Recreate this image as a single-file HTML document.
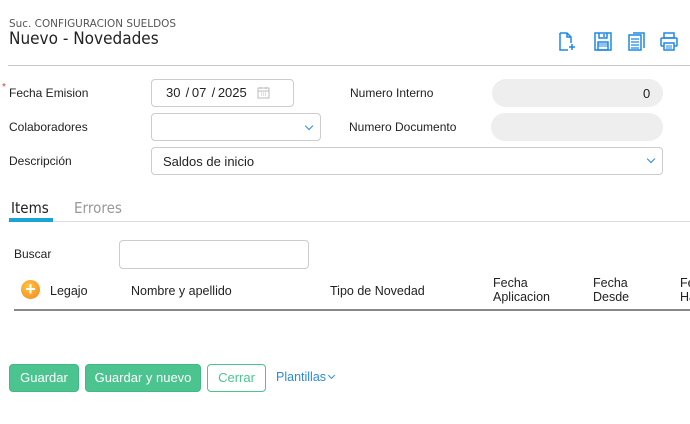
<!DOCTYPE html>
<html><head><meta charset="utf-8"><style>
*{box-sizing:border-box;margin:0;padding:0}
body{width:690px;height:424px;background:#fff;font-family:"Liberation Sans",sans-serif;color:#222;position:relative;overflow:hidden}
.a{position:absolute;white-space:nowrap}
.lbl{font-size:12px;color:#222}
.inp{position:absolute;border:1px solid #ccc;border-radius:4px;background:#fff}
.ro{position:absolute;background:#eeeeee;border-radius:14px}
.chev{position:absolute;width:6px;height:6px;border-right:1.3px solid #2d8ae0;border-bottom:1.3px solid #2d8ae0;transform:rotate(45deg)}
.btn{position:absolute;top:364px;height:28px;border-radius:4px;font-size:13px;line-height:26px;text-align:center}
.g{background:#4cc48f;color:#fff;border:1px solid #43b883}
.th{font-size:12.5px}
</style></head><body>
<div class="a" style="left:9px;top:17px;font-size:11px;color:#555;font-family:'DejaVu Sans',sans-serif;transform:scaleX(.95);transform-origin:left">Suc. CONFIGURACION SUELDOS</div>
<div class="a" style="left:9px;top:29px;font-size:17px;color:#222;font-family:'DejaVu Sans',sans-serif;transform:scaleX(.9);transform-origin:left">Nuevo - Novedades</div>

<svg class="a" style="left:557px;top:31px" width="125" height="22" viewBox="0 0 125 22" fill="none" stroke="#1e88e5" stroke-width="1.5">
<path d="M3 2h7l4 4v6M3 2v17h8M10 2v4h4M12 16h6M15 13v6"/>
<rect x="38" y="2" width="16" height="17"/><path d="M42 2v5h8v-5M47 3v3M41 11h10v8h-10z" /><path d="M41 13h10M41 15h10" stroke-width="1"/>
<path d="M74 4h10v15h-12v-15zM76 2h11v15"/><path d="M74 8h8M74 11h8M74 14h8M74 17h8" stroke-width="1.2"/>
<rect x="107" y="2" width="10" height="5"/><rect x="104" y="7" width="16" height="8" rx="1"/><rect x="107" y="12" width="10" height="7" fill="#fff"/><path d="M109 15h6M109 17h6" stroke-width="1"/>
</svg>
<div class="a" style="left:8px;top:65px;width:682px;height:1px;background:#c8c8c8"></div>

<div class="a" style="left:2px;top:82px;color:#e53935;font-size:10px">*</div>
<div class="a lbl" style="left:9px;top:86px">Fecha Emision</div>
<div class="inp" style="left:151px;top:79px;width:143px;height:28px"></div>
<div class="a" style="left:166px;top:85px;font-size:13px;word-spacing:-1px">30 &nbsp;/ 07 &nbsp;/ 2025</div>
<svg class="a" style="left:257px;top:86px" width="13" height="13" viewBox="0 0 13 13" fill="none" stroke="#bbb" stroke-width="1"><rect x="1" y="2" width="11" height="10"/><path d="M1 5h11M4 7h1M6 7h1M8 7h1M4 9h1M6 9h1M8 9h1M4 1v2M9 1v2"/></svg>

<div class="a lbl" style="left:350px;top:86px">Numero Interno</div>
<div class="ro" style="left:492px;top:79px;width:171px;height:28px"></div>
<div class="a" style="left:643px;top:86px;font-size:13px">0</div>

<div class="a lbl" style="left:9px;top:120px">Colaboradores</div>
<div class="inp" style="left:151px;top:113px;width:170px;height:28px"></div>
<div class="chev" style="left:306px;top:123px"></div>
<div class="a lbl" style="left:349px;top:120px">Numero Documento</div>
<div class="ro" style="left:491px;top:113px;width:172px;height:28px"></div>

<div class="a lbl" style="left:9px;top:154px">Descripción</div>
<div class="inp" style="left:151px;top:147px;width:512px;height:28px"></div>
<div class="a" style="left:163px;top:154px;font-size:13px">Saldos de inicio</div>
<div class="chev" style="left:648px;top:156px"></div>

<div class="a" style="left:11px;top:199px;font-size:15px;color:#222;font-family:'DejaVu Sans',sans-serif;transform:scaleX(.9);transform-origin:left">Items</div>
<div class="a" style="left:74px;top:199px;font-size:15px;color:#999;font-family:'DejaVu Sans',sans-serif;transform:scaleX(.9);transform-origin:left">Errores</div>
<div class="a" style="left:8px;top:221px;width:682px;height:1px;background:#ddd"></div>
<div class="a" style="left:9px;top:218px;width:44px;height:4px;background:#1aa3d4"></div>

<div class="a lbl" style="left:14px;top:247px">Buscar</div>
<div class="inp" style="left:119px;top:240px;width:190px;height:29px"></div>

<div class="a" style="left:21px;top:280px;width:19px;height:19px;border-radius:50%;background:radial-gradient(circle at 40% 35%,#ffc53d,#f5851f);color:#fff;font-size:18px;line-height:18px;text-align:center;font-weight:bold">+</div>
<div class="a th" style="left:50px;top:284px">Legajo</div>
<div class="a th" style="left:131px;top:284px">Nombre y apellido</div>
<div class="a th" style="left:330px;top:284px">Tipo de Novedad</div>
<div class="a th" style="left:493px;top:276px;line-height:14px">Fecha<br>Aplicacion</div>
<div class="a th" style="left:593px;top:276px;line-height:14px">Fecha<br>Desde</div>
<div class="a th" style="left:680px;top:276px;line-height:14px">Fecha<br>Hasta</div>
<div class="a" style="left:14px;top:309px;width:676px;height:2px;background:#888"></div>

<div class="btn g" style="left:9px;width:70px">Guardar</div>
<div class="btn g" style="left:85px;width:116px">Guardar y nuevo</div>
<div class="btn" style="left:207px;width:59px;border:1px solid #4cc48f;color:#4cc48f;background:#fff">Cerrar</div>
<div class="a" style="left:276px;top:370px;font-size:12.5px;color:#2d8ae0">Plantillas</div>
<div class="chev" style="left:329px;top:373px;width:5px;height:5px;border-width:1px"></div>
</body></html>
